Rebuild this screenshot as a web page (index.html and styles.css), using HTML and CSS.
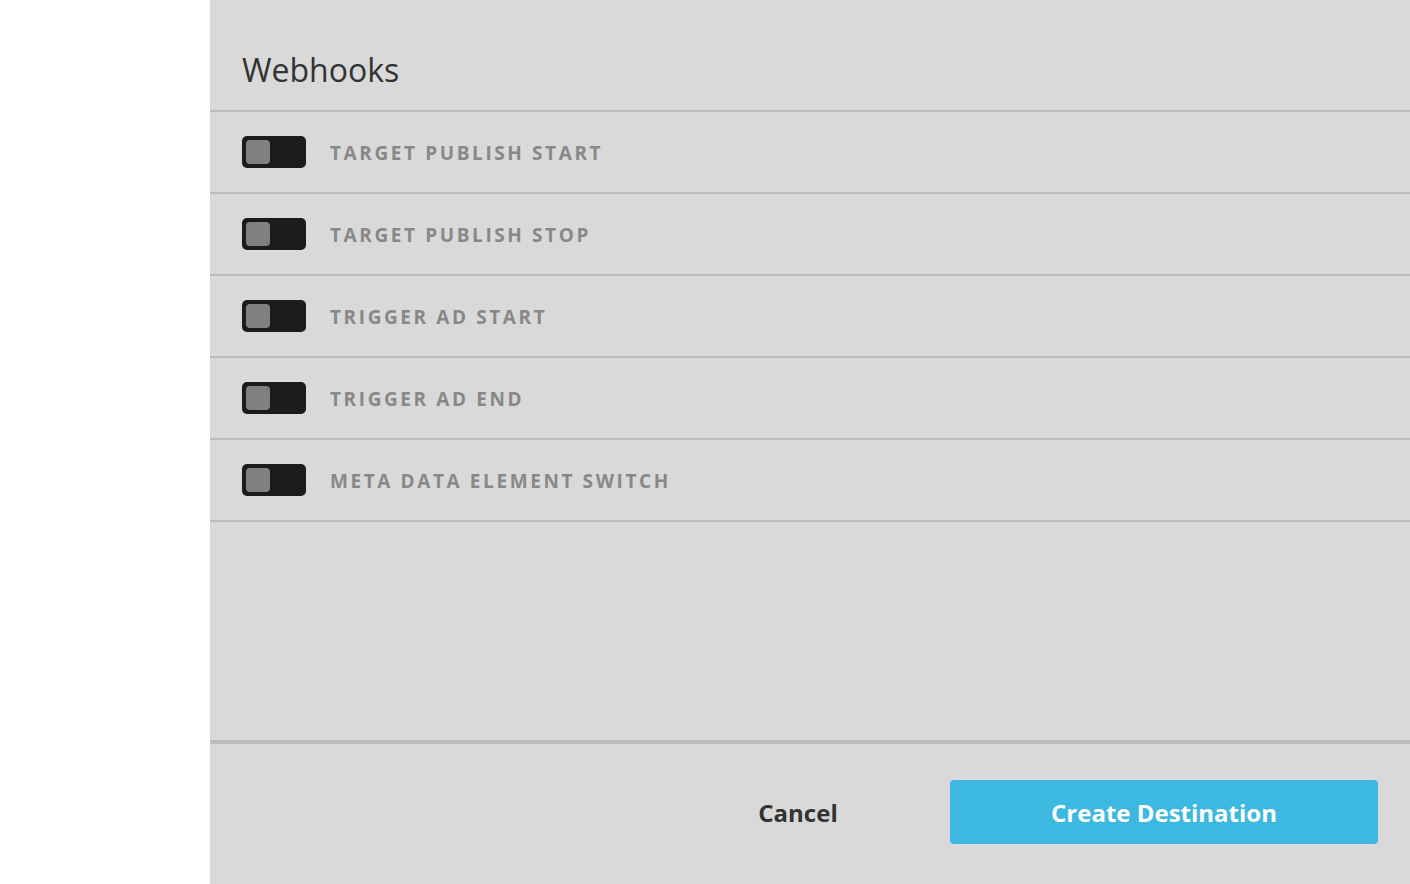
FILE: index.html
```html
<!DOCTYPE html>
<html>
<head>
<meta charset="utf-8">
<link rel="stylesheet" href="styles.css">
</head>
<body>
<div class="page">
  <aside class="side"></aside>
  <main class="panel">
    <div class="content">
      <h2 class="title">Webhooks</h2>
      <ul class="list">
        <li class="row"><span class="toggle"><span class="knob"></span></span><span class="label">TARGET PUBLISH START</span></li>
        <li class="row"><span class="toggle"><span class="knob"></span></span><span class="label">TARGET PUBLISH STOP</span></li>
        <li class="row"><span class="toggle"><span class="knob"></span></span><span class="label">TRIGGER AD START</span></li>
        <li class="row"><span class="toggle"><span class="knob"></span></span><span class="label">TRIGGER AD END</span></li>
        <li class="row"><span class="toggle"><span class="knob"></span></span><span class="label">META DATA ELEMENT SWITCH</span></li>
      </ul>
    </div>
    <footer class="footer">
      <button class="btn-cancel">Cancel</button>
      <button class="btn-create">Create Destination</button>
    </footer>
  </main>
</div>
</body>
</html>
```
FILE: styles.css
```css
* { box-sizing: border-box; }
html, body { margin: 0; padding: 0; height: 100%; }
body { font-family: "Open Sans", "Noto Sans", sans-serif; background: #fff; }
.page { display: flex; height: 884px; }
.side { width: 210px; background: #fff; flex: none; }
.panel { flex: 1; background: #d9d9d9; display: flex; flex-direction: column; }
.content { flex: 1; }
.title {
  margin: 0;
  height: 110px;
  padding: 48px 0 0 32px;
  font-size: 32px;
  line-height: 44px;
  font-weight: 400;
  color: #333;
}
.list { list-style: none; margin: 0; padding: 0; border-top: 2px solid #bcbcbc; }
.row {
  height: 82px;
  border-bottom: 2px solid #bcbcbc;
  display: flex;
  align-items: center;
  padding-left: 32px;
}
.toggle {
  width: 64px; height: 32px;
  background: #1b1b1b;
  border-radius: 5px;
  padding: 4px;
  display: flex;
  flex: none;
}
.knob { width: 24px; height: 24px; background: #808080; border-radius: 4px; }
.label {
  margin-left: 24px;
  padding-top: 2px;
  font-size: 19px;
  font-weight: 700;
  letter-spacing: 2.6px;
  color: #888;
}
.footer {
  height: 144px;
  border-top: 4px solid #bcbcbc;
  display: flex;
  align-items: flex-start;
  justify-content: flex-end;
  padding: 36px 32px 0 0;
}
.btn-cancel {
  border: 0; background: none;
  font-family: inherit; font-size: 24px; font-weight: 700;
  color: #333;
  height: 64px;
  width: 176px;
  margin-right: 64px;
}
.btn-create {
  border: 0; background: #3db8e0;
  border-radius: 4px;
  width: 428px; height: 64px;
  font-family: inherit; font-size: 24px; font-weight: 700;
  color: #fff;
}
```
